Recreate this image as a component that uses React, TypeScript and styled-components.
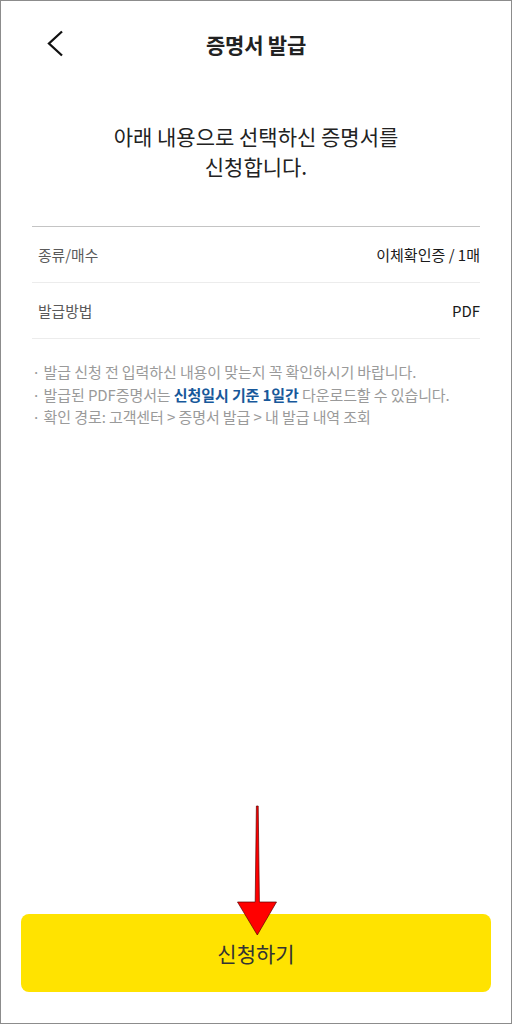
import React from "react";
import styled, { createGlobalStyle } from "styled-components";

const GlobalStyle = createGlobalStyle`
  * { box-sizing: border-box; }
  html, body {
    margin: 0;
    padding: 0;
    background: #fff;
    font-family: "Noto Sans CJK KR", "Noto Sans", sans-serif;
  }
`;

const notes = [
  { text: "발급 신청 전 입력하신 내용이 맞는지 꼭 확인하시기 바랍니다." },
  { text: "발급된 PDF증명서는 ", strong: "신청일시 기준 1일간", rest: " 다운로드할 수 있습니다." },
  { text: "확인 경로: 고객센터 > 증명서 발급 > 내 발급 내역 조회" },
];

const rows = [
  { label: "종류/매수", value: "이체확인증 / 1매" },
  { label: "발급방법", value: "PDF" },
];

const Screen = styled.div`
  position: relative;
  width: 512px;
  height: 1024px;
  border: 1px solid #8c8c8c;
  display: flex;
  flex-direction: column;
  background: #fff;
  overflow: hidden;
`;

const Header = styled.header`
  position: relative;
  height: 86px;
  display: flex;
  align-items: center;
  justify-content: center;
`;

const BackButton = styled.button`
  position: absolute;
  left: 38px;
  top: 22px;
  width: 34px;
  height: 42px;
  border: none;
  background: none;
  padding: 0;
  display: flex;
  align-items: center;
  justify-content: center;
`;

const Title = styled.h1`
  margin: 0;
  font-size: 21px;
  font-weight: 700;
  color: #222;
  letter-spacing: -0.2px;
`;

const Lead = styled.p`
  margin: 34px 0 0;
  text-align: center;
  font-size: 21px;
  line-height: 30px;
  color: #222;
`;

const Content = styled.section`
  padding: 0 31px 0 31px;
`;

const Table = styled.div`
  margin-top: 45px;
  border-top: 1.5px solid #c4c4c4;
`;

const Row = styled.div`
  display: flex;
  justify-content: space-between;
  align-items: center;
  height: 56px;
  border-bottom: 1px solid #ececec;
`;

const Label = styled.span`
  font-size: 14.8px;
  color: #5a5a5a;
  padding-left: 6px;
`;

const Value = styled.span`
  font-size: 15px;
  color: #1a1a1a;
`;

const Notes = styled.ul`
  list-style: none;
  margin: 22px 0 0;
  padding: 0;
`;

const Note = styled.li`
  font-size: 15px;
  line-height: 22.5px;
  color: #9a9a9a;
  white-space: nowrap;
  letter-spacing: -0.1px;
`;

const Strong = styled.strong`
  color: #17589a;
  font-weight: 700;
`;

const Footer = styled.div`
  margin-top: auto;
  padding: 0 20px 31px;
`;

const SubmitButton = styled.button`
  width: 100%;
  height: 78px;
  border: none;
  border-radius: 8px;
  background: #ffe300;
  color: #333;
  font-family: inherit;
  font-size: 21px;
  padding: 0;
`;

const Pointer = styled.svg`
  position: absolute;
  left: 230px;
  top: 800px;
  pointer-events: none;
`;

export default function App() {
  return (
    <>
      <GlobalStyle />
      <Screen>
        <Header>
          <BackButton aria-label="뒤로">
            <svg width="20" height="30" viewBox="0 0 20 30">
              <polyline
                points="16,2.5 3,14.5 16,26.5"
                fill="none"
                stroke="#111"
                strokeWidth="2.3"
              />
            </svg>
          </BackButton>
          <Title>증명서 발급</Title>
        </Header>
        <Lead>
          아래 내용으로 선택하신 증명서를
          <br />
          신청합니다.
        </Lead>
        <Content>
          <Table>
            {rows.map((row) => (
              <Row key={row.label}>
                <Label>{row.label}</Label>
                <Value>{row.value}</Value>
              </Row>
            ))}
          </Table>
          <Notes>
            {notes.map((note, index) => (
              <Note key={index}>
                · {note.text}
                {note.strong && <Strong>{note.strong}</Strong>}
                {note.rest}
              </Note>
            ))}
          </Notes>
        </Content>
        <Footer>
          <SubmitButton>신청하기</SubmitButton>
        </Footer>
        <Pointer width="52" height="140" viewBox="230 800 52 140">
          <polygon
            points="255.4,805 257.2,805 258.4,901 275.5,901 256.3,934 236.5,901 254.2,901"
            fill="#ff0000"
            stroke="#5a0000"
            strokeWidth="0.7"
            strokeLinejoin="miter"
          />
        </Pointer>
      </Screen>
    </>
  );
}
